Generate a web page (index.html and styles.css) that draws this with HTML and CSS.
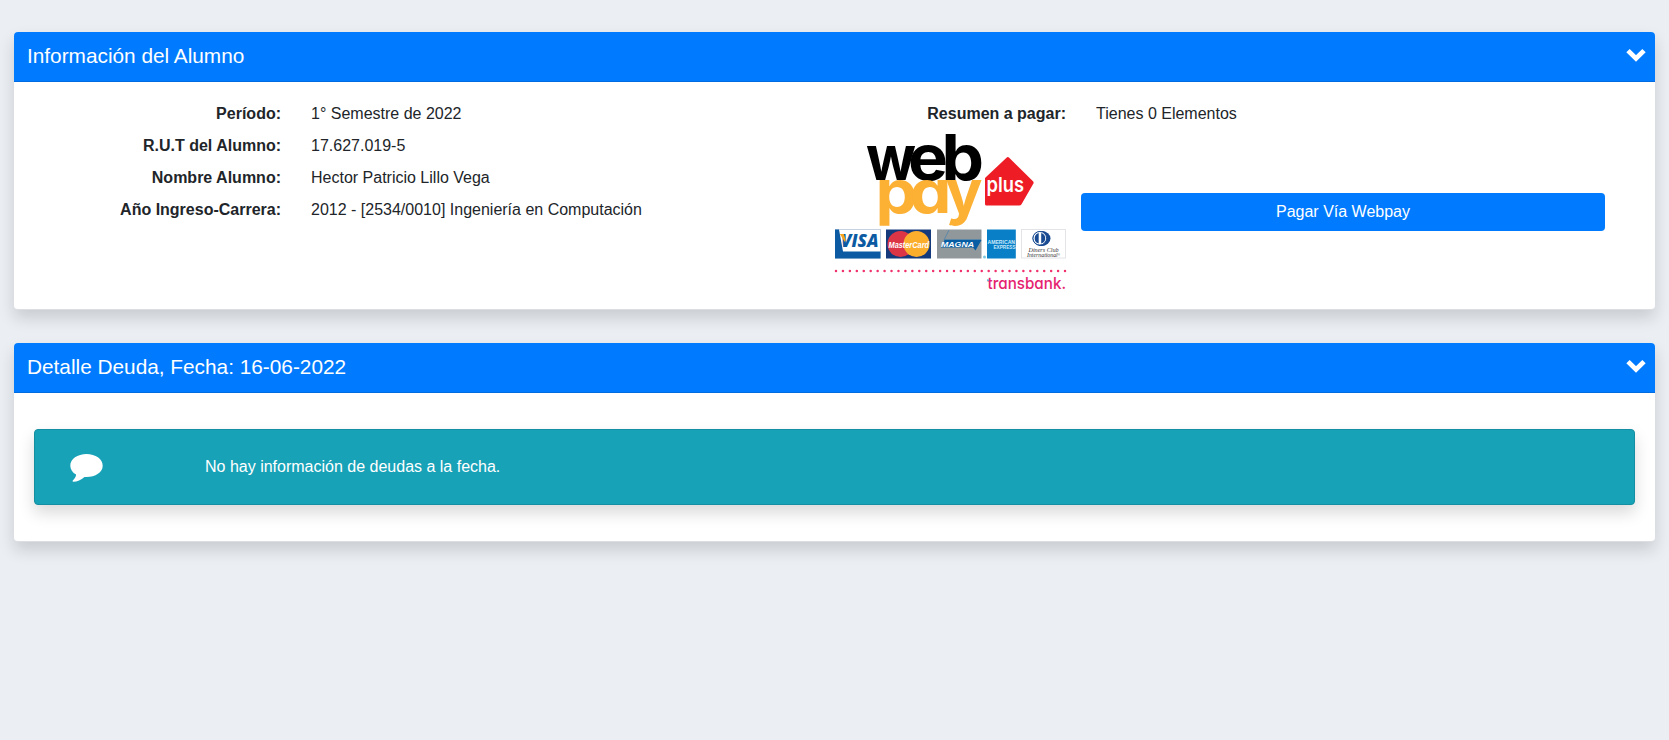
FILE: index.html
```html
<!DOCTYPE html>
<html lang="es">
<head>
<meta charset="utf-8">
<title>Información del Alumno</title>
<link rel="stylesheet" href="styles.css">
</head>
<body>
<main class="page">
  <section class="card">
    <header class="card-header">
      <h1 class="card-title">Información del Alumno</h1>
      <svg class="chevron" viewBox="0 0 20 14"><path d="M2 2.600 10 10.400 18 2.600"/></svg>
    </header>
    <div class="card-body info">
      <dl class="data">
        <dt>Período:</dt><dd>1° Semestre de 2022</dd>
        <dt>R.U.T del Alumno:</dt><dd>17.627.019-5</dd>
        <dt>Nombre Alumno:</dt><dd>Hector Patricio Lillo Vega</dd>
        <dt>Año Ingreso-Carrera:</dt><dd>2012 - [2534/0010] Ingeniería en Computación</dd>
      </dl>
      <div class="payment">
        <div class="summary-label">Resumen a pagar:</div>
        <div class="summary-value">Tienes 0 Elementos</div>
        <svg class="webpay" viewBox="835 130 231 165">
          <g class="wordmark">
            <text x="866" y="180" textLength="50" lengthAdjust="spacingAndGlyphs">w</text>
            <text x="908" y="180" textLength="40" lengthAdjust="spacingAndGlyphs">e</text>
            <text x="941.500" y="180" textLength="42.500" lengthAdjust="spacingAndGlyphs">b</text>
            <g class="pay">
              <text x="875.500" y="213" textLength="42" lengthAdjust="spacingAndGlyphs">p</text>
              <text x="909.500" y="213" textLength="42" lengthAdjust="spacingAndGlyphs">a</text>
              <text x="945.500" y="213" textLength="37" lengthAdjust="spacingAndGlyphs">y</text>
            </g>
          </g>
          <path fill="#ee1c25" d="M985 178 1006.500 157.700Q1007.800 156.500 1009.200 157.700L1033 181.300Q1034.300 182.700 1033 184.200L1021.500 204.200Q1020.800 205.500 1019 205.500H986.500Q985 205.500 985 204Z"/>
          <text class="plus" x="986.500" y="192.300" textLength="37.500" lengthAdjust="spacingAndGlyphs">plus</text>
          <!-- Visa -->
          <rect x="835.5" y="229.5" width="45" height="28.5" fill="#fff" stroke="#c4d2e2"/>
          <path fill="#0b5aa2" d="M835 229.500h4l4 22h37.500v7H835z"/>
          <text class="visa" x="841" y="246.800" textLength="37.500" lengthAdjust="spacingAndGlyphs">VISA</text>
          <path fill="#f7a21b" d="M839.800 234h4l2 6-1 2z"/>
          <!-- MasterCard -->
          <rect x="886" y="229.500" width="45" height="29" fill="#153a7c"/>
          <circle cx="900.500" cy="244" r="13" fill="#dc3545"/>
          <circle cx="916.500" cy="244" r="13" fill="#fbad2c"/>
          <text class="mastercard" x="888.500" y="247.500" textLength="40.500" lengthAdjust="spacingAndGlyphs">MasterCard</text>
          <!-- Magna -->
          <rect x="937" y="229.500" width="44.500" height="29" fill="#90989b"/>
          <path fill="none" stroke="#4e83aa" stroke-width=".8" d="M944 240 949 230M944 239.500h37"/>
          <path fill="#075da4" d="M941 247.500 944.500 240H981.500L975.500 250.500 973 247.500Z"/>
          <text class="magna" x="941" y="247" textLength="33" lengthAdjust="spacingAndGlyphs">MAGNA</text>
          <!-- American Express -->
          <rect x="987" y="229.500" width="28.800" height="29" fill="#087fc7"/>
          <circle cx="984.500" cy="257" r="1.500" fill="#80c8df"/>
          <text class="amex" x="987.500" y="243.800" textLength="27.500" lengthAdjust="spacingAndGlyphs">AMERICAN</text>
          <text class="amex" x="993.500" y="249.200" textLength="22" lengthAdjust="spacingAndGlyphs">EXPRESS</text>
          <!-- Diners Club -->
          <rect x="1021.500" y="229.500" width="44" height="28.500" fill="#fff" stroke="#e4e4e8"/>
          <path fill="#174a91" d="M1039 231h2a7.500 7.500 0 0 1 0 15h-2z"/>
          <ellipse cx="1041.500" cy="238.500" rx="9" ry="7.500" fill="#174a91"/>
          <circle cx="1039.800" cy="238.300" r="6.800" fill="#fff" stroke="#174a91"/>
          <path fill="#174a91" d="M1038.700 233a5.500 5.500 0 0 0 0 10.600zM1041.200 233a5.500 5.500 0 0 1 0 10.600z"/>
          <text class="diners" x="1028.500" y="251.500" textLength="30" lengthAdjust="spacingAndGlyphs">Diners Club</text>
          <text class="diners" x="1027" y="256.500" textLength="33" lengthAdjust="spacingAndGlyphs">International<tspan dy="-1" font-size="3">®</tspan></text>
          <!-- Transbank -->
          <path stroke="#f0316b" stroke-width="2.500" stroke-linecap="round" stroke-dasharray="0 6.940" d="M836 271H1065.500"/>
          <text class="transbank" x="987.500" y="288.600" textLength="78.500" lengthAdjust="spacingAndGlyphs">transbank.</text>
          <rect x="987" y="279.300" width="1.800" height="1.800" fill="#65b9df"/>
        </svg>
        <div class="action"><button class="btn">Pagar Vía Webpay</button></div>
      </div>
    </div>
  </section>

  <section class="card">
    <header class="card-header">
      <h2 class="card-title">Detalle Deuda, Fecha: 16-06-2022</h2>
      <svg class="chevron" viewBox="0 0 20 14"><path d="M2 2.600 10 10.400 18 2.600"/></svg>
    </header>
    <div class="card-body debt">
      <div class="notice">
        <svg class="comment" viewBox="0 0 33 29"><path fill="#fff" d="M16.500 1C25.500 1 32.700 6.100 32.700 12.700S25.500 24 16.500 24L14.500 23.900C11 26.700 7.300 28.500 3.400 28.800 2.600 28.900 2.300 28.200 2.800 27.600 4.900 25.500 5.900 24 6.100 21.600 2.500 19.500.3 16.300.3 12.700.3 6.100 7.500 1 16.500 1Z"/></svg>
        <p class="notice-text">No hay información de deudas a la fecha.</p>
      </div>
    </div>
  </section>
</main>
</body>
</html>
```
FILE: styles.css
```css
* { box-sizing: border-box; }
body {
  margin: 0;
  background: #ebeff4;
  color: #212529;
  font: 16px/24px "Liberation Sans", Arial, sans-serif;
}
.page {
  display: flex;
  flex-direction: column;
  gap: 33px;
  padding: 32px 14px;
}
.card {
  background: #fff;
  border-radius: 4px;
  border-bottom: 1px solid #dcdee1;
  box-shadow: 0 8px 16px rgba(0, 0, 0, .15);
}
.card-header {
  display: flex;
  align-items: center;
  justify-content: space-between;
  height: 50px;
  padding: 0 9px 2px 13px;
  background: #007bff;
  border-bottom: 1px solid #006cdf;
  border-radius: 4px 4px 0 0;
  color: #fff;
}
.card-title { margin: 0; font-size: 20.800px; font-weight: 400; line-height: 24px; }
.chevron { width: 20px; height: 14px; margin-bottom: 1px; overflow: visible; }
.chevron path { fill: none; stroke: #fff; stroke-width: 4.800; }
.info { display: flex; height: 227px; padding: 20px 50px 0 0; }
.data {
  display: grid;
  grid-template-columns: 267px 1fr;
  grid-auto-rows: 24px;
  gap: 8px 30px;
  width: 821px;
  margin: 0;
}
dt { font-weight: 700; text-align: right; }
dd { margin: 0; }
.payment {
  flex: 1;
  display: grid;
  grid-template-columns: 231px 1fr;
  grid-template-rows: 28px 165px;
  column-gap: 15px;
}
.summary-label { font-weight: 700; text-align: right; }
.summary-value { padding-left: 15px; }
.webpay { width: 231px; height: 165px; overflow: visible; }
.action { padding-top: 63px; }
.btn {
  display: block;
  width: 100%;
  height: 38px;
  padding: 0;
  border: 0;
  border-radius: 4px;
  background: #007bff;
  color: #fff;
  font: inherit;
}
.wordmark { font: 700 63px Inter, sans-serif; font-feature-settings: "cv11"; }
.pay { fill: #fcb034; font-size: 60px; }
.plus { fill: #fff; font: 600 20.500px Inter, sans-serif; }
.visa { fill: #0b5aa2; font: italic 800 18px "Open Sans", sans-serif; }
.mastercard { fill: #fff; font: italic 700 8.500px "Liberation Sans", sans-serif; }
.magna { fill: #fff; font: italic 700 8px "Liberation Sans", sans-serif; }
.amex { fill: #cceafa; font: 700 5.500px "Liberation Sans", sans-serif; }
.diners { fill: #333; font: italic 400 5.800px "Liberation Serif", serif; }
.transbank { fill: #e5226f; font: 500 16.500px Inter, sans-serif; font-feature-settings: "cv11"; }
.debt { height: 148px; padding: 36px 20px; }
.notice {
  display: flex;
  align-items: center;
  height: 76px;
  padding-left: 34.500px;
  background: #17a2b8;
  border: 1px solid #148ea1;
  border-radius: 4px;
  box-shadow: 0 8px 16px rgba(0, 0, 0, .15);
  color: #fff;
}
.comment { width: 33px; height: 29px; margin-top: 1px; }
.notice-text { margin: 0 0 0 102.500px; }
```
